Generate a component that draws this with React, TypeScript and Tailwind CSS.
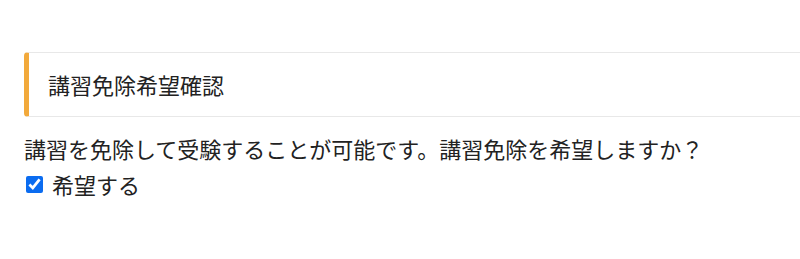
export default function App() {
  return (
    <div
      className="w-full overflow-hidden bg-white pl-6 pt-[52px] text-[22px] text-[#222]"
      style={{ fontFamily: '"Noto Sans CJK JP", "Noto Sans", sans-serif' }}
    >
      <div className="w-[800px] rounded border border-[#e8e8e8] border-l-[5px] border-l-[#f2a93b] py-[15px] pl-[19px] leading-[33px]">
        講習免除希望確認
      </div>
      <p className="mt-[13px] leading-[36px]">講習を免除して受験することが可能です。講習免除を希望しますか？</p>
      <label className="flex items-center leading-[36px]">
        <input type="checkbox" defaultChecked className="ml-[2px] h-[17px] w-[17px] accent-[#0b6cf0]" />
        <span className="ml-[9px]">希望する</span>
      </label>
    </div>
  );
}
